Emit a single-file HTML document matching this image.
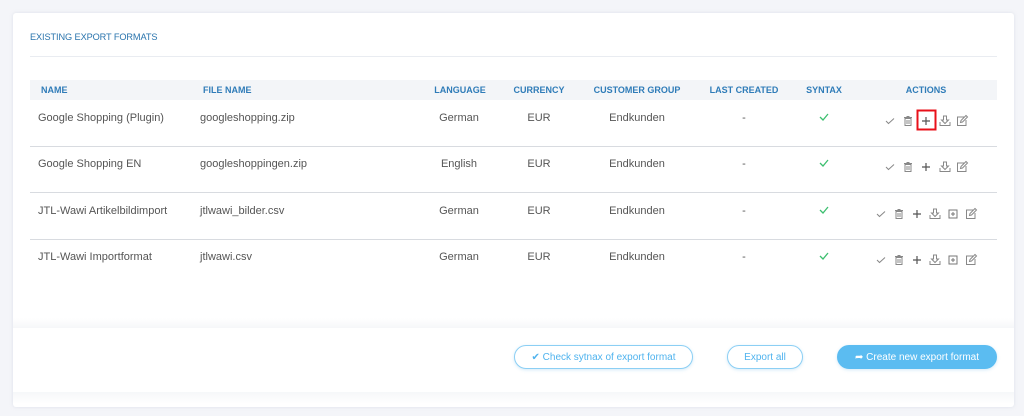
<!DOCTYPE html>
<html><head><meta charset="utf-8"><style>
*{margin:0;padding:0;box-sizing:border-box}
body{width:1024px;height:416px;background:#f4f5f9;font-family:"Liberation Sans",sans-serif;position:relative;overflow:hidden}
.card{position:absolute;left:13px;top:13px;width:1001px;height:394px;background:#fff;border-radius:3px;box-shadow:0 0 3px rgba(200,205,220,.5)}
.a{position:absolute;white-space:nowrap}
.title{left:30px;top:32px;font-size:9.2px;color:#2a74ad;letter-spacing:-.1px}
.hr{left:30px;top:56px;width:967px;height:1px;background:#e9ecf1}
.th{left:30px;top:80px;width:967px;height:20px;background:#f3f5f8}
.h{font-size:9px;font-weight:bold;color:#2f7cb8;top:85px}
.d{font-size:11px;color:#555}
.c{transform:translateX(-50%)}
.line{left:30px;width:967px;height:1px;background:#d8dbe0}
.btn{position:absolute;top:345px;height:24px;border-radius:12px;border:1px solid #8ccff4;color:#4fb3ee;font-size:10px;text-align:center;line-height:23px;box-shadow:0 1px 3px rgba(80,170,230,.25);background:#fff}
.fill{background:#5bbcf1;color:#fff;border-color:#5bbcf1}
</style></head><body>
<div class="card"></div>
<div class="a" style="left:13px;top:318px;width:1001px;height:10px;background:linear-gradient(#fff,#f6f7f9)"></div>
<div class="a" style="left:13px;top:392px;width:1001px;height:12px;background:linear-gradient(#f6f7f9,#fff)"></div>
<div class="a title">EXISTING EXPORT FORMATS</div>
<div class="a hr"></div>
<div class="a th"></div>
<div class="a h" style="left:41px">NAME</div>
<div class="a h" style="left:203px">FILE NAME</div>
<div class="a h c" style="left:460px">LANGUAGE</div>
<div class="a h c" style="left:539px">CURRENCY</div>
<div class="a h c" style="left:637px">CUSTOMER GROUP</div>
<div class="a h c" style="left:744px">LAST CREATED</div>
<div class="a h c" style="left:824px">SYNTAX</div>
<div class="a h c" style="left:926px">ACTIONS</div>

<div class="a d" style="left:38px;top:112px">Google Shopping (Plugin)</div>
<div class="a d" style="left:200px;top:112px">googleshopping.zip</div>
<div class="a d c" style="left:459px;top:112px">German</div>
<div class="a d c" style="left:539px;top:112px">EUR</div>
<div class="a d c" style="left:637px;top:112px">Endkunden</div>
<div class="a d c" style="left:744px;top:112px">-</div>
<div class="a line" style="top:146px"></div>

<div class="a d" style="left:38px;top:158px">Google Shopping EN</div>
<div class="a d" style="left:200px;top:158px">googleshoppingen.zip</div>
<div class="a d c" style="left:459px;top:158px">English</div>
<div class="a d c" style="left:539px;top:158px">EUR</div>
<div class="a d c" style="left:637px;top:158px">Endkunden</div>
<div class="a d c" style="left:744px;top:158px">-</div>
<div class="a line" style="top:192px"></div>

<div class="a d" style="left:38px;top:205px">JTL-Wawi Artikelbildimport</div>
<div class="a d" style="left:200px;top:205px">jtlwawi_bilder.csv</div>
<div class="a d c" style="left:459px;top:205px">German</div>
<div class="a d c" style="left:539px;top:205px">EUR</div>
<div class="a d c" style="left:637px;top:205px">Endkunden</div>
<div class="a d c" style="left:744px;top:205px">-</div>
<div class="a line" style="top:239px"></div>

<div class="a d" style="left:38px;top:251px">JTL-Wawi Importformat</div>
<div class="a d" style="left:200px;top:251px">jtlwawi.csv</div>
<div class="a d c" style="left:459px;top:251px">German</div>
<div class="a d c" style="left:539px;top:251px">EUR</div>
<div class="a d c" style="left:637px;top:251px">Endkunden</div>
<div class="a d c" style="left:744px;top:251px">-</div>

<svg width="1024" height="416" style="position:absolute;left:0;top:0" fill="none">
<defs>
<g id="ok"><path d="M-4 0 L-1 3 L4 -3" stroke="#3cbf6f" stroke-width="1.3"/></g>
<g id="ck"><path d="M-4 0 L-1.5 2.5 L4 -2.5" stroke="#888" stroke-width="1"/></g>
<g id="tr" stroke="#888" stroke-width="1"><path d="M-4 -3.5H4M-1.5 -4.5H1.5"/><rect x="-3" y="-2.5" width="6" height="7"/><path d="M-1 -1V3M1 -1V3"/></g>
<g id="pl" stroke="#555" stroke-width="1.2"><path d="M-4 0H4M0 -4V4"/></g>
<g id="dl" stroke="#888" stroke-width="1"><path d="M-1.5 -5V-1H-3.5L0 2.5L3.5 -1H1.5V-5Z"/><path d="M-5 1V4.5H5V1"/></g>
<g id="pb" stroke="#777" stroke-width="1"><rect x="-4" y="-4" width="8" height="8"/><path d="M-2 0H2M0 -2V2"/></g>
<g id="ed" stroke="#888" stroke-width="1"><path d="M2 -4H-4.5V4.5H4V-1"/><path d="M-1.5 1.5L-1 -0.5L4 -5.5L5.5 -4L0.5 1Z"/></g>
</defs>
<use href="#ok" x="824" y="117"/><use href="#ok" x="824" y="163"/><use href="#ok" x="824" y="210"/><use href="#ok" x="824" y="256"/>
<use href="#ck" x="890" y="121"/><use href="#tr" x="908" y="121"/><use href="#pl" x="926" y="121"/><use href="#dl" x="945" y="121"/><use href="#ed" x="962" y="121"/>
<rect x="917.5" y="110.5" width="18" height="19" stroke="#e8101a" stroke-width="2"/>
<use href="#ck" x="890" y="167"/><use href="#tr" x="908" y="167"/><use href="#pl" x="926" y="167"/><use href="#dl" x="945" y="167"/><use href="#ed" x="962" y="167"/>
<use href="#ck" x="881" y="214"/><use href="#tr" x="899" y="214"/><use href="#pl" x="917" y="214"/><use href="#dl" x="935" y="214"/><use href="#pb" x="953" y="214"/><use href="#ed" x="971" y="214"/>
<use href="#ck" x="881" y="260"/><use href="#tr" x="899" y="260"/><use href="#pl" x="917" y="260"/><use href="#dl" x="935" y="260"/><use href="#pb" x="953" y="260"/><use href="#ed" x="971" y="260"/>
</svg>

<div class="btn" style="left:514px;width:179px">✔ Check sytnax of export format</div>
<div class="btn" style="left:727px;width:76px">Export all</div>
<div class="btn fill" style="left:837px;width:160px">➦ Create new export format</div>
</body></html>
